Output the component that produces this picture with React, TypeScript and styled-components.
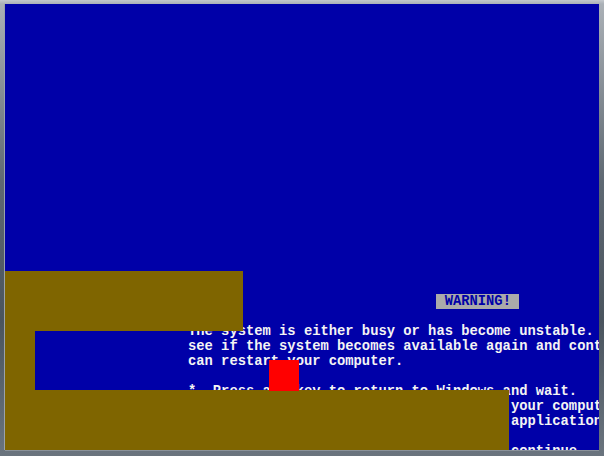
import * as React from 'react'
import styled, { createGlobalStyle } from 'styled-components'

const GlobalStyle = createGlobalStyle`
  html, body {
    margin: 0;
    padding: 0;
    background: #5a6470;
  }
`

const Bezel = styled.div`
  width: 604px;
  height: 456px;
  box-sizing: border-box;
  padding: 4px 5px 6px 5px;
  background: linear-gradient(180deg, #c4c8cc 0px, #aab0b6 4px, #5e6872 40%, #4a545e 70%, #6a747e 100%);
`

const Screen = styled.div`
  position: relative;
  width: 594px;
  height: 446px;
  overflow: hidden;
  background: #0000a8;
  box-shadow: -1px 0 0 #9aa2aa, 0 1px 0 #8a929a;
`

const Console = styled.pre`
  margin: 0;
  padding: 290px 0 0 183px;
  font-family: 'Liberation Mono', 'DejaVu Sans Mono', monospace;
  font-size: 13.8px;
  font-weight: bold;
  line-height: 15px;
  color: #f4f4f4;
  white-space: pre;
`

const Label = styled.span`
  background: #aaaaaa;
  color: #0000a8;
`

const Block = styled.div<{ $x: number; $y: number; $w: number; $h: number; $color?: string }>`
  position: absolute;
  left: ${(p) => p.$x}px;
  top: ${(p) => p.$y}px;
  width: ${(p) => p.$w}px;
  height: ${(p) => p.$h}px;
  background: ${(p) => p.$color || '#7f6500'};
`

const lines = [
  'The system is either busy or has become unstable. You can wait and',
  'see if the system becomes available again and continue working or you',
  'can restart your computer.',
  '',
  '*  Press any key to return to Windows and wait.',
  '*  Press CTRL+ALT+DEL again to restart your computer. You will',
  '   lose any unsaved information in all applications.',
  '',
  '                      Press any key to continue _',
]

const App = () => {
  return (
    <>
      <GlobalStyle />
      <Bezel>
        <Screen>
          <Console>
            {'                              '}
            <Label> WARNING! </Label>
            {'\n\n' + lines.join('\n')}
          </Console>
          <Block $x={0} $y={267} $w={238} $h={60} />
          <Block $x={0} $y={327} $w={30} $h={60} />
          <Block $x={0} $y={386} $w={504} $h={60} />
          <Block $x={264} $y={356} $w={30} $h={31} $color="#ff0000" />
        </Screen>
      </Bezel>
    </>
  )
}

export default App
